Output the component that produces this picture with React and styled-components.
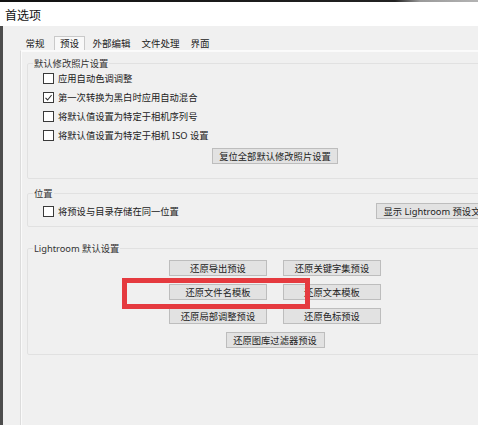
import React from 'react'
import styled, { createGlobalStyle } from 'styled-components'

const GlobalStyle = createGlobalStyle`
  html, body {
    margin: 0;
    padding: 0;
    overflow: hidden;
    background: #f0f0f0;
  }
  body {
    font-family: "Noto Sans", "Noto Sans CJK SC", sans-serif;
    color: #222;
  }
`

const Window = styled.div`
  position: relative;
  width: 540px;
  height: 425px;
  overflow: hidden;
  background: #f0f0f0;
`

const TopEdge = styled.div`
  height: 2px;
  background: linear-gradient(to right, #111 0, #222 395px, #9a9a9a 420px, #cfcfcf 100%);
`

const TitleBar = styled.div`
  height: 24px;
  background: #ffffff;
  display: flex;
  align-items: center;
  padding-left: 5px;
  font-family: "Noto Sans CJK SC", sans-serif;
  font-size: 12px;
  color: #111;
`

const Body = styled.div`
  height: 399px;
  overflow: hidden;
  box-sizing: border-box;
  border-left: 3px solid #4d4d4d;
  padding: 10px 0 0 17px;
`

const TabRow = styled.div`
  display: flex;
  height: 14px;
  align-items: stretch;
`

const Tab = styled.div`
  display: flex;
  align-items: center;
  box-sizing: border-box;
  font-family: "Noto Sans CJK SC", sans-serif;
  font-size: 9.5px;
  line-height: 11px;
  color: #222;
  padding: ${p => (p.$active ? '0 5px' : '0 4.5px')};
  margin: ${p => (p.$active ? '0 2px 0 4px' : '0')};
  background: ${p => (p.$active ? '#f8f8f8' : 'transparent')};
  border: 1px solid ${p => (p.$active ? '#c9c9c9' : 'transparent')};
  border-bottom: none;
`

const Panel = styled.div`
  border-top: 1px solid #fbfbfb;
  border-left: 1px solid #dcdcdc;
  box-shadow: inset 1px 1px 0 #fafafa;
  padding: 0 6px;
  height: 400px;
`

const Group = styled.fieldset`
  width: 496px;
  box-sizing: border-box;
  margin: ${p => p.$top}px 0 0 0;
  padding: 0 0 ${p => p.$bottom}px 0;
  border: 1px solid #e1e1e1;
  border-radius: 2px;
  min-inline-size: auto;
`

const Legend = styled.legend`
  margin-left: 5px;
  padding: 0 1px;
  font-family: "Noto Sans", "Noto Sans CJK SC", sans-serif;
  font-size: 9.3px;
  line-height: 11px;
  color: #333;
`

const CheckRow = styled.label`
  display: flex;
  align-items: center;
  gap: 4px;
  height: 19px;
  padding-left: 15px;
  font-family: "Noto Sans", "Noto Sans CJK SC", sans-serif;
  font-size: 9.3px;
  line-height: 11px;
  color: #222;
`

const Box = styled.span`
  width: 11px;
  height: 11px;
  box-sizing: border-box;
  border: 1px solid #3a3a3a;
  background: #ffffff;
  display: flex;
  align-items: center;
  justify-content: center;
`

const Button = styled.div`
  display: flex;
  align-items: center;
  justify-content: center;
  height: 16px;
  box-sizing: border-box;
  padding: 0 6px;
  min-width: ${p => p.$min || 0}px;
  background: #e2e2e2;
  border: 1px solid #bdbdbd;
  font-family: "Noto Sans", "Noto Sans CJK SC", sans-serif;
  font-size: 9.3px;
  line-height: 11px;
  color: #222;
  white-space: nowrap;
`

const CenterRow = styled.div`
  display: flex;
  justify-content: center;
  margin-top: 3px;
`

const LocationRow = styled.div`
  display: flex;
  align-items: center;
  justify-content: space-between;
  height: 24px;
  padding-right: 8px;

  > label {
    height: auto;
  }
`

const ButtonGrid = styled.div`
  display: grid;
  grid-template-columns: 98px 98px;
  column-gap: 16px;
  row-gap: 8px;
  justify-content: center;
  padding-top: 6px;
`

const WideCell = styled.div`
  grid-column: 1 / span 2;
  display: flex;
  justify-content: center;

  > div {
    width: 99px;
  }
`

const Highlight = styled.div`
  position: absolute;
  left: 122px;
  top: 278px;
  width: 188px;
  height: 31px;
  box-sizing: border-box;
  border: 5px solid #e53a3f;
  pointer-events: none;
`

const Check = ({ checked, children }) => (
  <CheckRow>
    <Box>
      {checked && (
        <svg width="9" height="9" viewBox="0 0 9 9">
          <polyline points="1.5,4.8 3.6,7 7.6,2" fill="none" stroke="#333" strokeWidth="1.1" />
        </svg>
      )}
    </Box>
    {children}
  </CheckRow>
)

const tabs = ['常规', '预设', '外部编辑', '文件处理', '界面']

const restoreButtons = [
  '还原导出预设',
  '还原关键字集预设',
  '还原文件名模板',
  '还原文本模板',
  '还原局部调整预设',
  '还原色标预设',
]

const App = () => (
  <>
    <GlobalStyle />
    <Window>
      <TopEdge />
      <TitleBar>首选项</TitleBar>
      <Body>
        <TabRow>
          {tabs.map(t => (
            <Tab key={t} $active={t === '预设'}>{t}</Tab>
          ))}
        </TabRow>
        <Panel>
          <Group $top={7} $bottom={14}>
            <Legend>默认修改照片设置</Legend>
            <Check>应用自动色调调整</Check>
            <Check checked>第一次转换为黑白时应用自动混合</Check>
            <Check>将默认值设置为特定于相机序列号</Check>
            <Check>将默认值设置为特定于相机 ISO 设置</Check>
            <CenterRow>
              <Button>复位全部默认修改照片设置</Button>
            </CenterRow>
          </Group>

          <Group $top={9} $bottom={3}>
            <Legend>位置</Legend>
            <LocationRow>
              <Check>将预设与目录存储在同一位置</Check>
              <Button $min={138}>显示 Lightroom 预设文件夹...</Button>
            </LocationRow>
          </Group>

          <Group $top={16} $bottom={6}>
            <Legend>Lightroom 默认设置</Legend>
            <ButtonGrid>
              {restoreButtons.map(b => (
                <Button key={b}>{b}</Button>
              ))}
              <WideCell>
                <Button>还原图库过滤器预设</Button>
              </WideCell>
            </ButtonGrid>
          </Group>
        </Panel>
      </Body>
      <Highlight />
    </Window>
  </>
)

export default App
